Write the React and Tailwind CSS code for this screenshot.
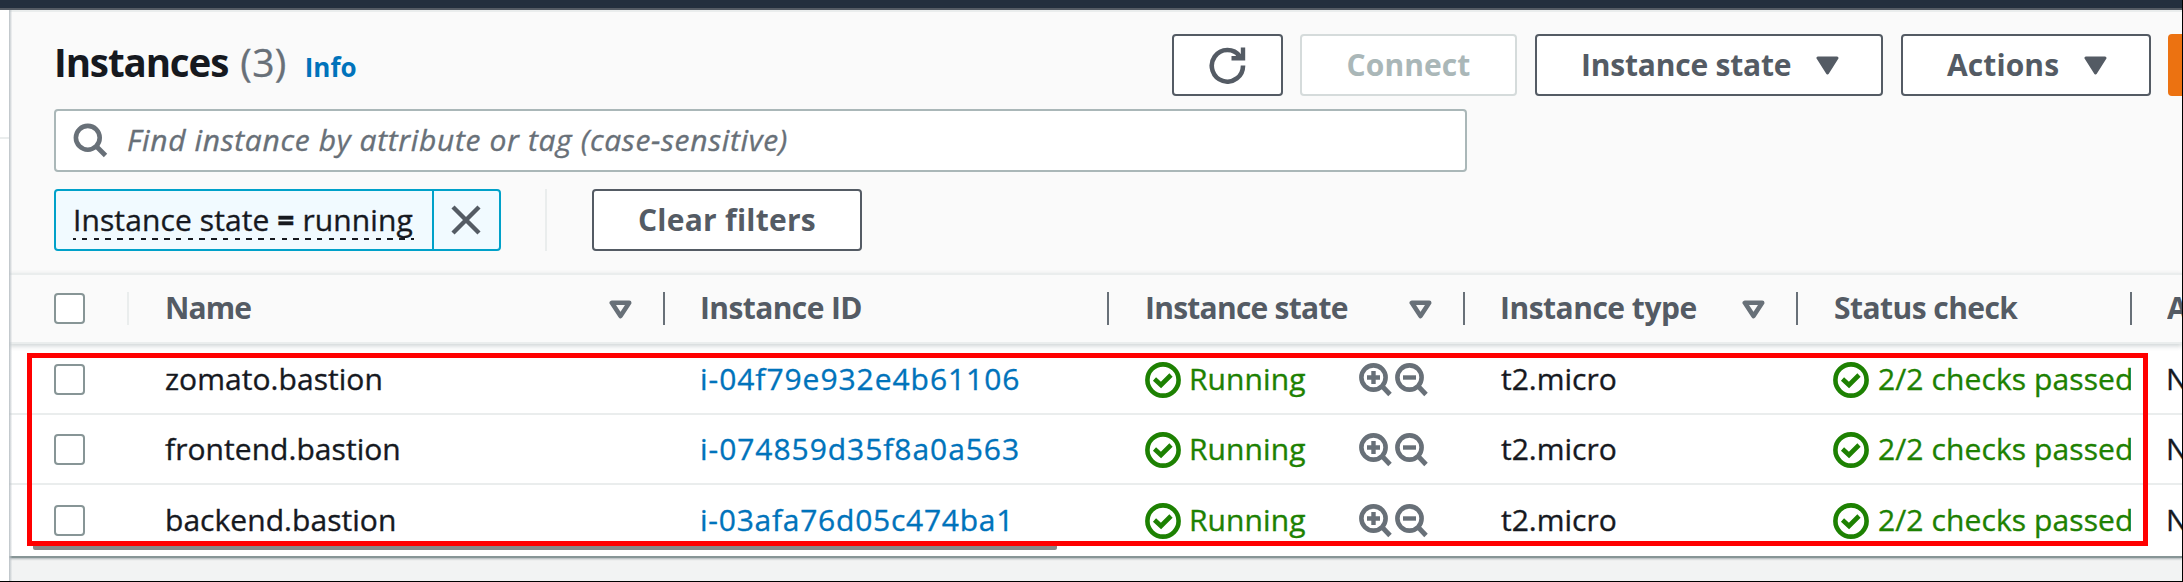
const FONT = "font-['Open_Sans','Noto_Sans',sans-serif]";

function Caret({ filled }) {
  return (
    <svg width="23" height="19" viewBox="0 0 23 19" className="block shrink-0">
      {filled ? (
        <path d="M2 2H21L11.5 17Z" fill="#545b64" stroke="#545b64" strokeWidth="3" strokeLinejoin="round" />
      ) : (
        <path d="M2.8 2.8H20.2L11.5 16Z" fill="none" stroke="#687078" strokeWidth="4.6" strokeLinejoin="round" />
      )}
    </svg>
  );
}

function CheckCircle() {
  return (
    <svg width="36" height="36" viewBox="0 0 36 36" className="block shrink-0">
      <circle cx="18" cy="18" r="15.6" fill="none" stroke="#1d8102" strokeWidth="4.6" />
      <path d="M9.5 17L16 23L26 13" fill="none" stroke="#1d8102" strokeWidth="4.6" />
    </svg>
  );
}

function Zoom({ plus }) {
  return (
    <svg width="34" height="34" viewBox="0 0 34 34" className="block shrink-0">
      <circle cx="14.5" cy="14.5" r="12.1" fill="none" stroke="#687078" strokeWidth="4.6" />
      <path d="M23 23L31 31.5" stroke="#687078" strokeWidth="4.8" />
      <path d={plus ? 'M8 14.5H21M14.5 8V21' : 'M8 14.5H21'} stroke="#687078" strokeWidth="4.4" />
    </svg>
  );
}

function Checkbox() {
  return <div className="h-[31px] w-[31px] rounded-[4px] border-2 border-[#879596] bg-white" />;
}

function Button({ className, children }) {
  return (
    <div className={`flex h-[62px] shrink-0 items-center rounded-[4px] border-2 bg-white font-bold ${className}`}>
      {children}
    </div>
  );
}

function HeaderCell({ className, label, track, sort }) {
  return (
    <div className={`flex shrink-0 items-center ${className}`}>
      <span className={`grow whitespace-nowrap pb-[1px] ${track}`}>{label}</span>
      {sort && <div className="mr-[31px] mt-px"><Caret /></div>}
      <div className="h-[33px] w-[2px] shrink-0 bg-[#687078]" />
    </div>
  );
}

function Row({ name, id, idTrack, height, pad, last }) {
  return (
    <div className={`flex [-webkit-text-stroke:0.35px] ${height} ${pad} ${last ? '' : 'border-b-2 border-[#eaeded]'}`}>
      <div className="flex h-[37px] w-full items-center">
        <div className="w-[156px] shrink-0 pl-[45px]"><Checkbox /></div>
        <div className="w-[535px] shrink-0 pb-[2px] tracking-[0.05px]">{name}</div>
        <div className={`w-[445px] shrink-0 pb-[2px] text-[#0073bb] ${idTrack}`}>{id}</div>
        <div className="flex w-[356px] shrink-0 items-center text-[#1d8102]">
          <CheckCircle />
          <span className="ml-[8px] w-[170px] pb-[2px] tracking-[0.1px]">Running</span>
          <Zoom plus />
          <div className="ml-[2px]"><Zoom /></div>
        </div>
        <div className="w-[332px] shrink-0 pb-[2px]">t2.micro</div>
        <div className="flex w-[298px] shrink-0 items-center overflow-hidden text-[#1d8102]">
          <CheckCircle />
          <span className="ml-[9px] whitespace-nowrap pb-[2px] tracking-[0.1px]">2/2 checks passed</span>
        </div>
        <div className="ml-[35px] w-[18px] shrink-0 overflow-hidden whitespace-nowrap pb-[2px]">No alarms</div>
      </div>
    </div>
  );
}

export default function App() {
  return (
    <div className={`relative flex h-[582px] w-[2183px] flex-col overflow-hidden border-b border-r border-black bg-white text-[30px] leading-[36px] text-[#16191f] ${FONT}`}>
      <div className="h-[10px] shrink-0 border-b-2 border-[#545b64] bg-[#232f3e]" />
      <div className="flex min-h-0 grow">
        <div className="w-[9px] shrink-0 pt-[127px]"><div className="h-[2px] bg-[#eaeded]" /></div>
        <div className="relative flex min-w-0 grow flex-col overflow-hidden bg-[#f2f3f3]">
          <div className="absolute inset-y-0 left-0 z-10 w-[3px] bg-gradient-to-r from-[#b9c0c5] to-[#b9c0c5]/10" />
          <div className="h-[2px] shrink-0 bg-[#eaeded]" />

          <div className="h-[261px] shrink-0 bg-[#fafafa] pl-[45px]">
            <div className="flex pt-[22px]">
              <div className="flex h-[62px] w-[1118px] shrink-0 items-baseline pt-[1px] leading-[54px]">
                <span className="text-[38.5px] font-bold tracking-[-1.1px]">Instances</span>
                <span className="ml-[12px] text-[39px] text-[#687078] tracking-[0.4px] [-webkit-text-stroke:0.35px]">(3)</span>
                <span className="ml-[18px] text-[26px] font-bold text-[#0073bb]">Info</span>
              </div>
              <Button className="w-[111px] justify-center border-[#545b64]">
                <svg width="37" height="37" viewBox="0 0 37 37">
                  <path d="M34 18.5A15.6 15.8 0 1 1 31 9.5" fill="none" stroke="#545b64" strokeWidth="4.6" />
                  <path d="M34 0.5V11.3H22.5M27 8L33 10" fill="none" stroke="#545b64" strokeWidth="4.4" />
                </svg>
              </Button>
              <Button className="ml-[17px] w-[217px] justify-center border-[#d5dbdb] text-[#aab7b8]">
                <span className="tracking-[0.1px]">Connect</span>
              </Button>
              <Button className="ml-[18px] w-[348px] border-[#545b64] pl-[44px] text-[#545b64]">
                <span className="w-[235px] whitespace-nowrap tracking-[-0.2px]">Instance state</span>
                <Caret filled />
              </Button>
              <Button className="ml-[18px] w-[250px] border-[#545b64] pl-[44px] text-[#545b64]">
                <span className="w-[137px] tracking-[0.1px]">Actions</span>
                <Caret filled />
              </Button>
              <div className="ml-[17px] h-[62px] w-[60px] shrink-0 rounded-[4px] bg-[#ec7211]" />
            </div>

            <div className="mt-[13px] flex h-[63px] w-[1413px] items-center rounded-[4px] border-2 border-[#aab7b8] bg-white pl-[17px]">
              <svg width="35" height="35" viewBox="0 0 35 35">
                <circle cx="14.8" cy="14.8" r="11.9" fill="none" stroke="#687078" strokeWidth="4.6" />
                <path d="M23 23L32.5 32.5" stroke="#687078" strokeWidth="4.8" />
              </svg>
              <span className="ml-[19px] whitespace-nowrap pb-[2px] italic tracking-[0.65px] text-[#687078] [-webkit-text-stroke:0.35px]">
                Find instance by attribute or tag (case-sensitive)
              </span>
            </div>

            <div className="mt-[17px] flex">
              <div className="flex h-[62px] w-[447px] rounded-[4px] border-2 border-[#00a1c9] bg-[#f1faff]">
                <div className="flex w-[376px] shrink-0 flex-col pl-[17px] pt-[11px]">
                  <span className="h-[36px] whitespace-nowrap tracking-[0.1px] [-webkit-text-stroke:0.35px]">
                    Instance state <b>=</b> running
                  </span>
                  <div className="h-[2px] w-[341px] bg-[repeating-linear-gradient(90deg,#16191f_0px,#16191f_2.6px,transparent_2.6px,transparent_8.9px,#16191f_8.9px,#16191f_11.75px)]" />
                </div>
                <div className="flex grow items-center justify-center border-l-2 border-[#00a1c9] pr-px">
                  <svg width="30" height="30" viewBox="0 0 30 30">
                    <path d="M2 2L28 28M28 2L2 28" stroke="#545b64" strokeWidth="4.4" />
                  </svg>
                </div>
              </div>
              <div className="ml-[44px] h-[62px] w-[2px] bg-[#eaeded]" />
              <Button className="ml-[45px] w-[270px] justify-center border-[#545b64] tracking-[0.25px] text-[#545b64]">
                Clear filters
              </Button>
            </div>
          </div>

          <div className="relative z-[1] flex h-[71px] shrink-0 items-center border-y-2 border-[#eaeded] bg-[#fafafa] font-bold text-[#545b64] shadow-[0_2px_5px_rgba(0,28,36,0.2)]">
            <div className="w-[118px] shrink-0 pl-[45px]"><Checkbox /></div>
            <div className="h-[33px] w-[2px] shrink-0 bg-[#eaeded]" />
            <HeaderCell className="w-[536px] pl-[36px]" label="Name" track="tracking-[-0.9px]" sort />
            <HeaderCell className="w-[444px] pl-[35px]" label="Instance ID" track="tracking-[-0.6px]" />
            <HeaderCell className="w-[356px] pl-[36px]" label="Instance state" track="tracking-[-0.75px]" sort />
            <HeaderCell className="w-[333px] pl-[35px]" label="Instance type" track="tracking-[-0.5px]" sort />
            <HeaderCell className="w-[334px] pl-[36px]" label="Status check" track="tracking-[-0.55px]" />
            <div className="ml-[35px] w-[15px] shrink-0 overflow-hidden whitespace-nowrap pb-[1px]">Alarm status</div>
          </div>

          <div className="h-[214px] shrink-0 border-b-2 border-[#879596] bg-white shadow-[0_1px_2px_rgba(0,28,36,0.3)]">
            <Row name="zomato.bastion" id="i-04f79e932e4b61106" idTrack="tracking-[0.95px]" height="h-[71px]" pad="pt-[17px]" />
            <Row name="frontend.bastion" id="i-074859d35f8a0a563" idTrack="tracking-[0.95px]" height="h-[70px]" pad="pt-[16px]" />
            <Row name="backend.bastion" id="i-03afa76d05c474ba1" idTrack="tracking-[0.75px]" height="h-[71px]" pad="pt-[17px]" last />
          </div>
        </div>
      </div>
      <div className="absolute left-[33px] top-[542px] z-10 h-[8px] w-[1024px] rounded-[2px] bg-[#888888]" />
      <div className="absolute left-[27px] top-[353px] z-20 h-[193px] w-[2121px] border-[5px] border-[#ff0000]" />
    </div>
  );
}
